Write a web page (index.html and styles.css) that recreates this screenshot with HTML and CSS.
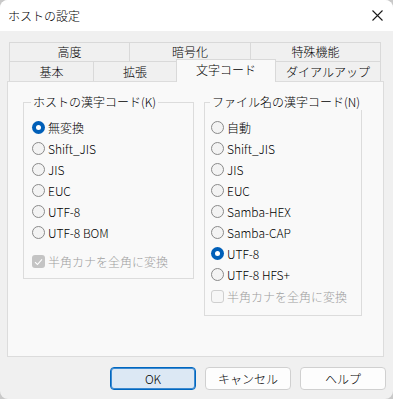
FILE: index.html
```html
<!DOCTYPE html>
<html lang="ja">
<head>
<meta charset="utf-8">
<title>ホストの設定</title>
<link rel="stylesheet" href="styles.css">
</head>
<body>
<div class="window">
  <div class="titlebar">
    <span class="title">ホストの設定</span>
    <span class="close">
      <svg width="11" height="11" viewBox="0 0 11 11"><path d="M0.5 0.5 L10.5 10.5 M10.5 0.5 L0.5 10.5" stroke="#1a1a1a" stroke-width="1.1" fill="none"/></svg>
    </span>
  </div>
  <div class="content">
    <div class="tabs">
      <div class="tabrow row1">
        <div class="tab w120">高度</div>
        <div class="tab w121">暗号化</div>
        <div class="tab w131 last">特殊機能</div>
      </div>
      <div class="tabrow row2">
        <div class="tab w84">基本</div>
        <div class="tab w83">拡張</div>
        <div class="tab w99 selected">文字コード</div>
        <div class="tab w106 last">ダイアルアップ</div>
      </div>
    </div>
    <div class="panel">
      <fieldset class="group left">
        <legend>ホストの漢字コード(K)</legend>
        <div class="opt"><span class="radio on"></span><span>無変換</span></div>
        <div class="opt"><span class="radio"></span><span>Shift_JIS</span></div>
        <div class="opt"><span class="radio"></span><span>JIS</span></div>
        <div class="opt"><span class="radio"></span><span>EUC</span></div>
        <div class="opt"><span class="radio"></span><span>UTF-8</span></div>
        <div class="opt"><span class="radio"></span><span>UTF-8 BOM</span></div>
        <div class="opt check-left disabled"><span class="check on"><svg width="9" height="8" viewBox="0 0 9 8"><path d="M1 4.2 L3.4 6.5 L8 1.3" stroke="#fff" stroke-width="1.1" fill="none"/></svg></span><span>半角カナを全角に変換</span></div>
      </fieldset>
      <fieldset class="group right">
        <legend>ファイル名の漢字コード(N)</legend>
        <div class="opt"><span class="radio"></span><span>自動</span></div>
        <div class="opt"><span class="radio"></span><span>Shift_JIS</span></div>
        <div class="opt"><span class="radio"></span><span>JIS</span></div>
        <div class="opt"><span class="radio"></span><span>EUC</span></div>
        <div class="opt"><span class="radio"></span><span>Samba-HEX</span></div>
        <div class="opt"><span class="radio"></span><span>Samba-CAP</span></div>
        <div class="opt"><span class="radio on"></span><span>UTF-8</span></div>
        <div class="opt"><span class="radio"></span><span>UTF-8 HFS+</span></div>
        <div class="opt check-right disabled"><span class="check"></span><span>半角カナを全角に変換</span></div>
      </fieldset>
    </div>
    <div class="buttons">
      <div class="btn default">OK</div>
      <div class="btn">キャンセル</div>
      <div class="btn">ヘルプ</div>
    </div>
  </div>
</div>
</body>
</html>
```
FILE: styles.css
```css
* { box-sizing: border-box; }
html, body {
  margin: 0;
  padding: 0;
  background: #c9c9c9;
}
body {
  font-family: "Noto Sans CJK JP", "Noto Sans", sans-serif;
  font-size: 12px;
  font-weight: 300;
  color: #000;
}
.window {
  width: 393px;
  height: 399px;
  background: #f0f0f0;
  border-radius: 8px;
  overflow: hidden;
  display: flex;
  flex-direction: column;
}
.titlebar {
  height: 31px;
  background: #ffffff;
  display: flex;
  align-items: center;
  justify-content: space-between;
  padding: 0 10px 0 8px;
}
.title {
  font-size: 12px;
  line-height: 16px;
}
.close {
  display: flex;
  width: 11px;
  height: 11px;
}
.content {
  padding: 11px 9px 0 7px;
  display: flex;
  flex-direction: column;
}
.tabs {
  margin: 0 3px 0 2px;
}
.tabrow {
  display: flex;
}
.row1 { height: 19px; }
.row2 { height: 20px; align-items: flex-start; }
.tab {
  border-top: 1px solid #d9d9d9;
  border-left: 1px solid #d9d9d9;
  background: #f0f0f0;
  text-align: center;
  line-height: 18px;
  height: 100%;
}
.tab.last { border-right: 1px solid #d9d9d9; }
.row2 .tab { line-height: 19px; }
.tab.selected {
  position: relative;
  z-index: 1;
  margin-top: -2px;
  height: 23px;
  margin-bottom: -1px;
  background: #f9f9f9;
  border-right: 1px solid #d9d9d9;
  margin-right: -1px;
  line-height: 20px;
}
.w120 { width: 120px; }
.w121 { width: 121px; }
.w131 { width: 131px; }
.w84 { width: 84px; }
.w83 { width: 83px; }
.w99 { width: 100px; }
.w106 { width: 106px; }
.panel {
  height: 276px;
  background: #f9f9f9;
  border: 1px solid #dcdcdc;
  padding: 12px 0 0 15px;
  display: flex;
  align-items: flex-start;
  gap: 10px;
}
.group {
  margin: 0;
  border: 1px solid #dcdcdc;
  display: flex;
  flex-direction: column;
  min-width: 0;
}
.group legend {
  padding: 0 2px;
  margin-left: -1px;
  line-height: 16px;
  white-space: nowrap;
}
.group.left {
  width: 171px;
  height: 185px;
  padding: 7px 0 0 8px;
}
.group.right {
  width: 158px;
  height: 222px;
  padding: 7px 0 0 6px;
}
.opt {
  display: flex;
  align-items: center;
  height: 21px;
  gap: 3px;
  line-height: 16px;
  white-space: nowrap;
}
.check-left { margin-top: 8px; }
.check-right { margin-top: 1px; }
.disabled { color: #9d9d9d; }
.radio {
  width: 13px;
  height: 13px;
  border-radius: 50%;
  border: 1px solid #8a8a8a;
  background: #f3f3f3;
  flex: none;
  display: flex;
  align-items: center;
  justify-content: center;
}
.radio.on {
  border: none;
  background: #005fb8;
}
.radio.on::after {
  content: "";
  width: 5px;
  height: 5px;
  border-radius: 50%;
  background: #fff;
}
.check {
  width: 13px;
  height: 13px;
  border-radius: 3px;
  border: 1px solid #cfcfcf;
  background: #f6f6f6;
  flex: none;
  display: flex;
  align-items: center;
  justify-content: center;
}
.check.on {
  border: none;
  background: #c4c4c4;
}
.buttons {
  display: flex;
  justify-content: flex-end;
  gap: 9px;
  margin-top: 10px;
  margin-right: -2px;
}
.btn {
  width: 86px;
  height: 23px;
  border: 1px solid #d0d0d0;
  border-radius: 4px;
  background: #fdfdfd;
  display: flex;
  align-items: center;
  justify-content: center;
  line-height: 16px;
}
.btn.default {
  background: #dce8f4;
  border: 1px solid #0067c0;
  box-shadow: inset 0 0 0 1px #3d8ad0;
}
```
